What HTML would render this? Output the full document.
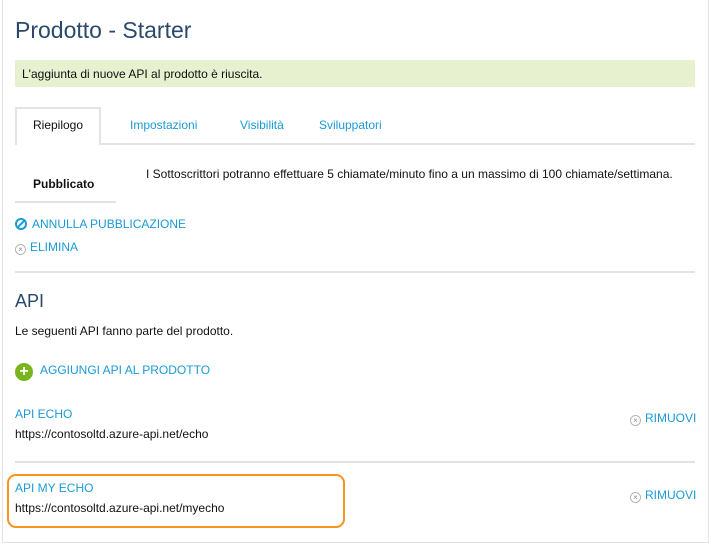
<!DOCTYPE html>
<html><head><meta charset="utf-8"><style>
*{margin:0;padding:0;box-sizing:border-box}
body{width:711px;height:544px;background:#fff;font-family:"Liberation Sans",sans-serif;font-size:12px;color:#111;position:relative;overflow:hidden}
.a{position:absolute;white-space:nowrap}
.blue{color:#1a9ad6}
.line{position:absolute;background:#e3e3e3;height:2px}
.x{display:inline-block;width:11px;height:11px;border:1px solid #b5b5b5;border-radius:50%;font-size:8px;line-height:9px;text-align:center;color:#888;vertical-align:-1px;margin-right:4px}
</style></head><body>
<div style="position:absolute;left:2px;top:0;width:707px;height:543px;border:1px solid #e3e3e3;border-top:none"></div>
<div class="a" style="left:15px;top:17px;font-size:23px;color:#2b4a6b">Prodotto - Starter</div>
<div class="a" style="left:15px;top:60px;width:680px;height:27px;background:#e7f0cf"></div>
<div class="a" style="left:22px;top:67px">L'aggiunta di nuove API al prodotto è riuscita.</div>
<div class="a" style="left:15px;top:107px;width:86px;height:38px;border:2px solid #e3e3e3;border-bottom:none;background:#fff"></div>
<div class="line" style="left:100px;top:143px;width:595px"></div>
<div class="line" style="left:15px;top:143px;width:2px"></div>
<div class="a" style="left:33px;top:118px">Riepilogo</div>
<div class="a blue" style="left:130px;top:118px">Impostazioni</div>
<div class="a blue" style="left:240px;top:118px">Visibilità</div>
<div class="a blue" style="left:319px;top:118px">Sviluppatori</div>
<div class="a" style="left:33px;top:177px;font-weight:bold">Pubblicato</div>
<div class="line" style="left:15px;top:201px;width:101px"></div>
<div class="a" style="left:146px;top:167px">I Sottoscrittori potranno effettuare 5 chiamate/minuto fino a un massimo di 100 chiamate/settimana.</div>
<div class="a blue" style="left:15px;top:217px"><span style="display:inline-block;width:12px;height:12px;border:2px solid #1a9ad6;border-radius:50%;vertical-align:-2px;margin-right:5px;position:relative"><span style="position:absolute;left:3px;top:-1px;width:2px;height:10px;background:#1a9ad6;transform:rotate(45deg)"></span></span>ANNULLA PUBBLICAZIONE</div>
<div class="a blue" style="left:15px;top:240px"><span class="x">×</span>ELIMINA</div>
<div class="line" style="left:15px;top:271px;width:680px"></div>
<div class="a" style="left:15px;top:291px;font-size:18px;color:#2b4a6b">API</div>
<div class="a" style="left:15px;top:324px">Le seguenti API fanno parte del prodotto.</div>
<div class="a blue" style="left:15px;top:363px"><span style="display:inline-block;width:18px;height:18px;border-radius:50%;background:#7ab51d;color:#fff;font-weight:bold;font-size:16px;line-height:18px;text-align:center;vertical-align:-2px;margin-right:7px">+</span>AGGIUNGI API AL PRODOTTO</div>
<div class="a blue" style="left:15px;top:407px">API ECHO</div>
<div class="a" style="left:15px;top:427px">https://contosoltd.azure-api.net/echo</div>
<div class="a blue" style="left:630px;top:411px"><span class="x">×</span>RIMUOVI</div>
<div class="line" style="left:15px;top:461px;width:680px"></div>
<div class="a" style="left:7px;top:474px;width:338px;height:54px;border:2px solid #f7941d;border-radius:9px"></div>
<div class="a blue" style="left:15px;top:481px">API MY ECHO</div>
<div class="a" style="left:15px;top:501px">https://contosoltd.azure-api.net/myecho</div>
<div class="a blue" style="left:630px;top:488px"><span class="x">×</span>RIMUOVI</div>
</body></html>
